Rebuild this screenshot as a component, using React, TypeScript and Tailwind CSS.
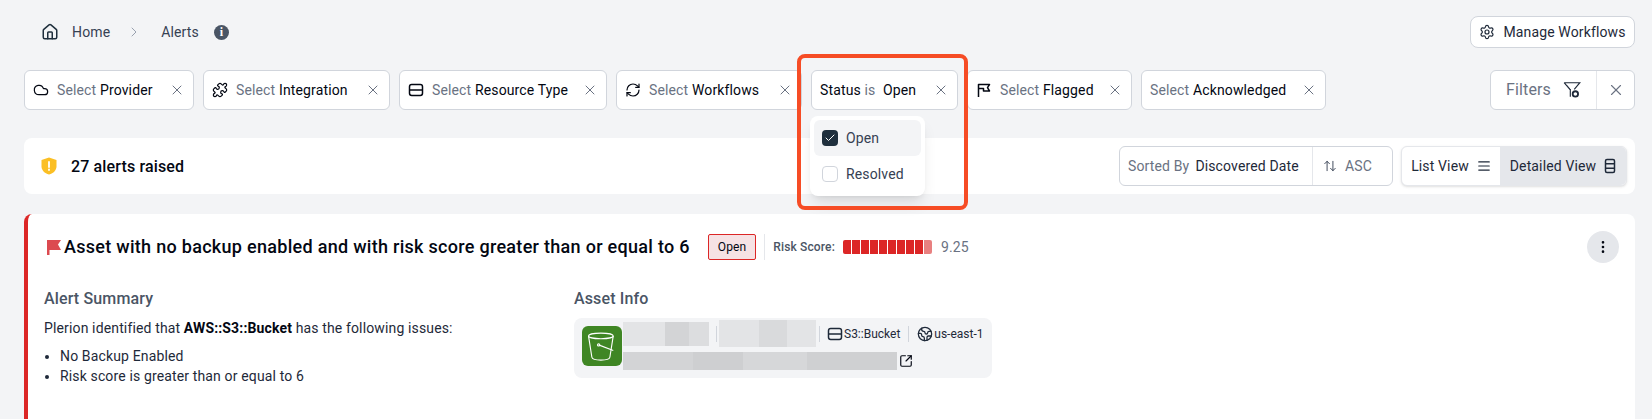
import React from 'react';
import { House, ChevronRight, Cloud, Puzzle, X, RefreshCw, Settings, ArrowUpDown, AlignJustify, Check, EllipsisVertical, SquareArrowOutUpRight, Earth } from 'lucide-react';

const ServerIcon = ({ className }: { className?: string }) => (
  <svg viewBox="0 0 16 16" fill="none" stroke="currentColor" strokeWidth="1.5" className={className}>
    <rect x="1.5" y="2.5" width="13" height="11" rx="2.2" />
    <path d="M1.5 8h13M4.2 5.2h.01M4.2 10.800h.01" />
  </svg>
);

const FlagOutline = ({ className }: { className?: string }) => (
  <svg viewBox="0 0 16 16" fill="none" stroke="currentColor" strokeWidth="1.5" strokeLinejoin="round" className={className}>
    <path d="M2.500 15V2.500h11l-2 3.200 2 3.300h-6V6.600H2.500" />
  </svg>
);

const FilterCog = ({ className }: { className?: string }) => (
  <svg viewBox="0 0 16 16" fill="none" stroke="currentColor" strokeWidth="1" className={className}>
    <path d="M1 1.500h14L10 7.500M1 1.500l5.500 6.500V14" />
    <path d="M3 3.500 7 8" strokeWidth="0.7" />
    <circle cx="11" cy="11.500" r="2.400" strokeWidth="1.600" />
  </svg>
);

const Chip = ({ icon, label, width }: { icon?: React.ReactNode; label: string; width: string }) => (
  <div className={`flex h-10 ${width} items-center justify-between rounded-md border border-gray-300 bg-white pl-2 pr-2 text-sm`}>
    <div className="flex items-center gap-2 whitespace-nowrap">
      {icon}
      <span className="text-gray-500">Select <span className="font-[450] text-gray-950">{label}</span></span>
    </div>
    <X className="h-4 w-4 text-gray-500" strokeWidth={1.5} />
  </div>
);

const segments = [1, 1, 1, 1, 1, 1, 1, 1, 1, 0];

export default function App() {
  return (
    <div className="relative h-[419px] w-[1652px] overflow-hidden bg-[#f3f4f6] pl-6 pr-[17px] font-['Roboto',sans-serif] tracking-[0.14px] text-gray-950">
      {/* Breadcrumb */}
      <div className="flex h-[70px] items-start justify-between pt-4">
        <div className="flex h-8 items-center pl-[17px] text-sm text-gray-700">
          <House className="h-[18px] w-[18px] text-[#1f2f3d]" strokeWidth={2} />
          <span className="ml-[13px]">Home</span>
          <ChevronRight className="ml-4 h-4 w-4 text-gray-400" strokeWidth={1.5} />
          <span className="ml-[19px]">Alerts</span>
          <div className="ml-[15px] flex h-[15px] w-[15px] items-center justify-center rounded-full bg-gray-600 font-['Liberation_Serif',serif] text-xs font-bold text-white">i</div>
        </div>
        <button className="flex h-8 w-[165px] items-center justify-center gap-2 whitespace-nowrap rounded-lg border border-gray-300 bg-white text-sm text-gray-800">
          <Settings className="h-4 w-4" strokeWidth={1.8} />
          Manage Workflows
        </button>
      </div>

      {/* Filters */}
      <div className="flex items-center justify-between">
        <div className="flex gap-[9px]">
          <Chip width="w-[170px]" label="Provider" icon={<Cloud className="h-4 w-4" strokeWidth={1.8} />} />
          <Chip width="w-[187px]" label="Integration" icon={<Puzzle className="h-4 w-4" strokeWidth={1.8} />} />
          <Chip width="w-[208px]" label="Resource Type" icon={<ServerIcon className="h-4 w-4" />} />
          <Chip width="w-[186px]" label="Workflows" icon={<RefreshCw className="h-4 w-4" strokeWidth={1.8} />} />
          <div className="flex h-10 w-[147px] items-center justify-between rounded-md border border-gray-300 bg-white pl-2 pr-2 text-sm">
            <span className="whitespace-nowrap font-[450]">Status <span className="font-normal text-gray-500">is</span> <span className="ml-1">Open</span></span>
            <X className="h-4 w-4 text-gray-500" strokeWidth={1.5} />
          </div>
          <Chip width="w-[165px]" label="Flagged" icon={<FlagOutline className="h-4 w-4" />} />
          <Chip width="w-[185px]" label="Acknowledged" />
        </div>
        <div className="flex h-10 w-[145px] items-center rounded-md border border-gray-300 bg-white">
          <div className="flex h-full flex-1 items-center justify-center gap-3 border-r border-gray-200 text-base text-gray-500">
            Filters
            <FilterCog className="h-[18px] w-[18px] text-gray-800" />
          </div>
          <div className="flex w-[37px] justify-center">
            <X className="h-[18px] w-[18px] text-gray-500" strokeWidth={1.5} />
          </div>
        </div>
      </div>

      {/* Count bar */}
      <div className="mt-7 flex h-[56px] items-center justify-between rounded-lg bg-white pl-[17px] pr-2">
        <div className="flex items-center gap-3.5 font-medium">
          <svg viewBox="0 0 16 18" className="h-[18px] w-4">
            <path d="M8 .5 15.500 3v6.200c0 4-3 7-7.500 8.300C3.500 16.200.5 13.200.5 9.200V3z" fill="#fbbf24" />
            <path d="M8 5v5M8 12.500v.6" stroke="#fff" strokeWidth="1.800" strokeLinecap="round" />
          </svg>
          <span className="pt-px text-base">27 alerts raised</span>
        </div>
        <div className="flex items-center gap-2 text-sm">
          <div className="flex h-10 w-[274px] items-center rounded-md border border-gray-300 bg-white">
            <div className="flex h-full w-[193px] items-center gap-1.5 whitespace-nowrap border-r border-gray-200 pl-2">
              <span className="text-gray-500">Sorted By</span>
              <span className="text-gray-800">Discovered Date</span>
            </div>
            <div className="flex items-center gap-2 pl-2.5 text-gray-500">
              <ArrowUpDown className="h-3.5 w-3.5 text-gray-700" strokeWidth={1.6} />
              ASC
            </div>
          </div>
          <div className="flex h-10 w-[226px] overflow-hidden rounded-md border border-gray-200 bg-white shadow-sm">
            <div className="flex w-[98px] items-center justify-center gap-2 whitespace-nowrap text-gray-800">
              List View
              <AlignJustify className="h-3.5 w-3.5" strokeWidth={2} />
            </div>
            <div className="flex flex-1 items-center justify-center gap-2 whitespace-nowrap bg-gray-200 text-gray-800">
              Detailed View
              <svg viewBox="0 0 12 16" fill="none" stroke="currentColor" strokeWidth="1.500" className="h-4 w-3">
                <rect x="1.500" y="1.500" width="9" height="13" rx="1.500" />
                <path d="M1.500 5.800h9M1.500 10.200h9" />
              </svg>
            </div>
          </div>
        </div>
      </div>

      {/* Alert card */}
      <div className="mt-5 h-[300px] rounded-lg border-l-4 border-[#dc2626] bg-white pl-4 pr-4 pt-[17px]">
        <div className="flex items-start justify-between">
          <div className="mt-[3px] flex h-[26px] items-center pl-0.5">
            <svg viewBox="0 0 16 16" className="h-4 w-4 shrink-0">
              <path d="M1 16V1h14l-3 4.500L15 11H3.500v5z" fill="#dc4a50" />
            </svg>
            <h2 className="ml-0.5 whitespace-nowrap text-lg font-medium tracking-[0.29px]">Asset with no backup enabled and with risk score greater than or equal to 6</h2>
            <span className="ml-[18px] flex h-[26px] items-center rounded-[2px] border border-[#dc2626] bg-[#f6e2e4] px-[9px] text-xs">Open</span>
            <div className="ml-2 h-[26px] w-px bg-gray-200" />
            <span className="ml-2 whitespace-nowrap text-xs font-medium text-gray-600">Risk Score:</span>
            <div className="ml-2 flex h-3.5 gap-px overflow-hidden rounded-[2px]">
              {segments.map((s, i) => (
                <div key={i} className={s ? 'h-full w-2 bg-[#dc2626]' : 'h-full w-2 bg-[#e88080]'} />
              ))}
            </div>
            <span className="ml-[9px] text-sm text-gray-500">9.25</span>
          </div>
          <div className="flex h-8 w-8 items-center justify-center rounded-full bg-gray-200">
            <EllipsisVertical className="h-4 w-4" />
          </div>
        </div>

        <div className="mt-6 flex">
          <div className="w-[530px] text-sm text-gray-800">
            <h3 className="text-base font-medium text-gray-600">Alert Summary</h3>
            <p className="mt-[7px]">Plerion identified that <b className="text-gray-950">AWS::S3::Bucket</b> has the following issues:</p>
            <ul className="mt-2 list-disc pl-4">
              <li>No Backup Enabled</li>
              <li>Risk score is greater than or equal to 6</li>
            </ul>
          </div>
          <div>
            <h3 className="text-base font-medium text-gray-600">Asset Info</h3>
            <div className="mt-[7px] flex h-[60px] w-[418px] rounded-lg bg-[#f3f4f6] pl-2 pt-[2px]">
              <div className="mt-[6px] flex h-10 w-10 shrink-0 items-center justify-center rounded-md bg-[#3f8624]">
                <svg viewBox="0 0 32 32" fill="none" stroke="#fff" strokeWidth="1" className="h-9 w-9">
                  <ellipse cx="15" cy="7" rx="11" ry="2.500" />
                  <path d="M4 7l3 19c.3 1.500 3.500 2.500 8 2.500s7.700-1 8-2.500l3-19" />
                  <path d="M13 15l13 5" />
                  <circle cx="13" cy="15" r="1" />
                </svg>
              </div>
              <div className="ml-px flex flex-col gap-[5px]">
                <div className="flex h-[27px] items-center whitespace-nowrap text-xs tracking-normal text-gray-800">
                  <div className="flex h-6 w-[86px]">
                    <div className="flex-1 bg-[#e3e4e6]" />
                    <div className="w-6 bg-[#d3d4d6]" />
                    <div className="w-5 bg-[#dcdddf]" />
                  </div>
                  <div className="ml-[7px] mr-[2px] h-4 w-px bg-gray-300" />
                  <div className="flex h-[27px] w-[97px]">
                    <div className="w-10 bg-[#e3e4e6]" />
                    <div className="w-7 bg-[#d9dadc]" />
                    <div className="flex-1 bg-[#e3e4e6]" />
                  </div>
                  <div className="ml-[3px] mr-[7px] h-4 w-px bg-gray-300" />
                  <ServerIcon className="h-4 w-4" />
                  <span className="ml-px">S3::Bucket</span>
                  <div className="mx-2 h-4 w-px bg-gray-300" />
                  <Earth className="h-4 w-4" strokeWidth={1.9} />
                  <span className="ml-px">us-east-1</span>
                </div>
                <div className="flex items-center gap-0.5">
                  <div className="flex h-[18px] w-[274px]">
                    <div className="w-[70px] bg-[#d3d4d6]" />
                    <div className="w-[50px] bg-[#cecfd1]" />
                    <div className="w-[64px] bg-[#d6d7d9]" />
                    <div className="flex-1 bg-[#cfd0d2]" />
                  </div>
                  <SquareArrowOutUpRight className="h-3.5 w-3.5" strokeWidth={2} />
                </div>
              </div>
            </div>
          </div>
        </div>
      </div>

      {/* Status dropdown */}
      <div className="absolute left-[810px] top-[116px] w-[115px] rounded-lg bg-white p-1 text-sm text-gray-700 shadow-lg">
        <div className="flex h-9 items-center gap-2 rounded-md bg-[#f3f4f6] pl-2">
          <div className="flex h-4 w-4 items-center justify-center rounded-sm bg-[#1f2f3d]">
            <Check className="h-3 w-3 text-white" strokeWidth={2} />
          </div>
          Open
        </div>
        <div className="flex h-9 items-center gap-2 pl-2">
          <div className="h-4 w-4 rounded-sm border border-gray-300 bg-white" />
          Resolved
        </div>
      </div>

      {/* Highlight */}
      <div className="pointer-events-none absolute left-[797px] top-[54px] h-[156px] w-[171px] rounded-lg border-4 border-[#f64c25]" />
    </div>
  );
}
